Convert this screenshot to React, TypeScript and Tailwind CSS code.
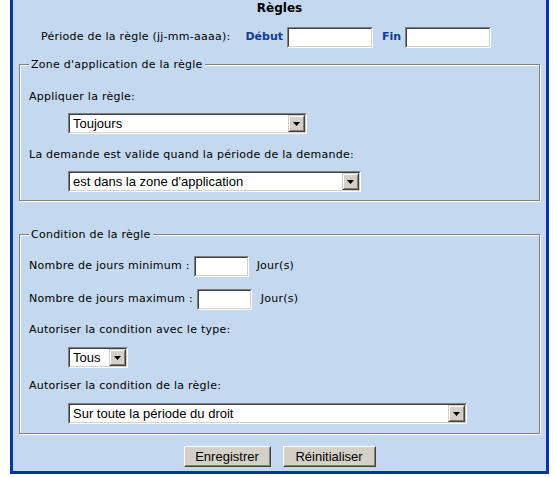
import React from 'react';

const BG = 'bg-[#c4d9ef]';

// champ "enfoncé" façon Windows classique
const Inset: React.FC<{ className?: string; children?: React.ReactNode }> = ({ className = '', children }) => (
  <div className={`border border-t-[#808080] border-l-[#808080] border-b-white border-r-white ${className}`}>
    <div className="flex h-full items-center border border-t-[#404040] border-l-[#404040] border-b-[#d4d0c8] border-r-[#d4d0c8] bg-white">
      {children}
    </div>
  </div>
);

const Select: React.FC<{ value: string; className: string }> = ({ value, className }) => (
  <Inset className={`h-[21px] ${className}`}>
    <span className="flex-1 whitespace-nowrap pl-[3px] font-['Liberation_Sans',Arial,sans-serif] text-[13px] leading-none tracking-normal text-black">
      {value}
    </span>
    <span className="h-full w-[17px] border border-t-[#d4d0c8] border-l-[#d4d0c8] border-b-[#404040] border-r-[#404040] bg-[#d4d0c8]">
      <span className="flex h-full w-full items-center justify-center border border-t-white border-l-white border-b-[#808080] border-r-[#808080]">
        <svg width="7" height="4" viewBox="0 0 7 4">
          <path d="M0 0H7L3.5 4Z" fill="#000" />
        </svg>
      </span>
    </span>
  </Inset>
);

const Button: React.FC<{ label: string; className: string }> = ({ label, className }) => (
  <button
    type="button"
    className={`h-[21px] border border-t-white border-l-white border-b-[#404040] border-r-[#404040] bg-[#d4d0c8] p-0 ${className}`}
  >
    <span className="flex h-full w-full items-center justify-center border border-t-[#d4d0c8] border-l-[#d4d0c8] border-b-[#808080] border-r-[#808080] font-['Liberation_Sans',Arial,sans-serif] text-[13px] leading-none tracking-normal text-black">
      {label}
    </span>
  </button>
);

const Fieldset: React.FC<{ legend: string; className: string; children: React.ReactNode }> = ({ legend, className, children }) => (
  <fieldset
    className={`mx-[6px] border border-[#808080] pl-[9px] shadow-[1px_1px_0_#fff,inset_1px_1px_0_#fff] ${className}`}
  >
    <legend className={`px-[2px] leading-[13px] ${BG}`}>{legend}</legend>
    {children}
  </fieldset>
);

export default function App() {
  return (
    <div className="min-h-screen bg-white">
      <div className="ml-[10px] w-[539px] border-x-[3px] border-b-[3px] border-[#0536a3] bg-[#c4d9ef] pb-[4px] font-['DejaVu_Sans',Verdana,sans-serif] text-[11px] tracking-[0.25px] text-black">
        <div className="h-[16px] text-center text-[12px] font-bold leading-[16px] tracking-normal">Règles</div>

        <div className="mt-[11px] flex h-[21px] items-center pl-[28px]">
          <span>Période de la règle (jj-mm-aaaa):</span>
          <span className="ml-[15px] font-bold tracking-normal text-[#133a96]">Début</span>
          <Inset className="ml-[4px] h-[21px] w-[86px]" />
          <span className="ml-[9px] font-bold tracking-normal text-[#133a96]">Fin</span>
          <Inset className="ml-[4px] h-[21px] w-[86px]" />
        </div>

        <Fieldset legend="Zone d'application de la règle" className="mt-[10px] pb-[8px]">
          <div className="mt-[19px] leading-[14px]">Appliquer la règle:</div>
          <Select value="Toujours" className="ml-[39px] mt-[9px] w-[239px]" />
          <div className="mt-[14px] leading-[14px]">La demande est valide quand la période de la demande:</div>
          <Select value="est dans la zone d'application" className="ml-[39px] mt-[9px] w-[293px]" />
        </Fieldset>

        <Fieldset legend="Condition de la règle" className="mt-[27px] pb-[9px]">
          <div className="mt-[15px] flex h-[21px] items-center">
            <span>Nombre de jours minimum :</span>
            <Inset className="ml-[4px] h-[21px] w-[55px]" />
            <span className="ml-[8px]">Jour(s)</span>
          </div>
          <div className="mt-[12px] flex h-[21px] items-center">
            <span>Nombre de jours maximum :</span>
            <Inset className="ml-[4px] h-[21px] w-[55px]" />
            <span className="ml-[9px]">Jour(s)</span>
          </div>
          <div className="mt-[13px] leading-[14px]">Autoriser la condition avec le type:</div>
          <Select value="Tous" className="ml-[39px] mt-[10px] w-[60px]" />
          <div className="mt-[11px] leading-[14px]">Autoriser la condition de la règle:</div>
          <Select value="Sur toute la période du droit" className="ml-[39px] mt-[10px] w-[399px]" />
        </Fieldset>

        <div className="mt-[12px] flex justify-center gap-[12px]">
          <Button label="Enregistrer" className="w-[87px]" />
          <Button label="Réinitialiser" className="w-[93px]" />
        </div>
      </div>
    </div>
  );
}
